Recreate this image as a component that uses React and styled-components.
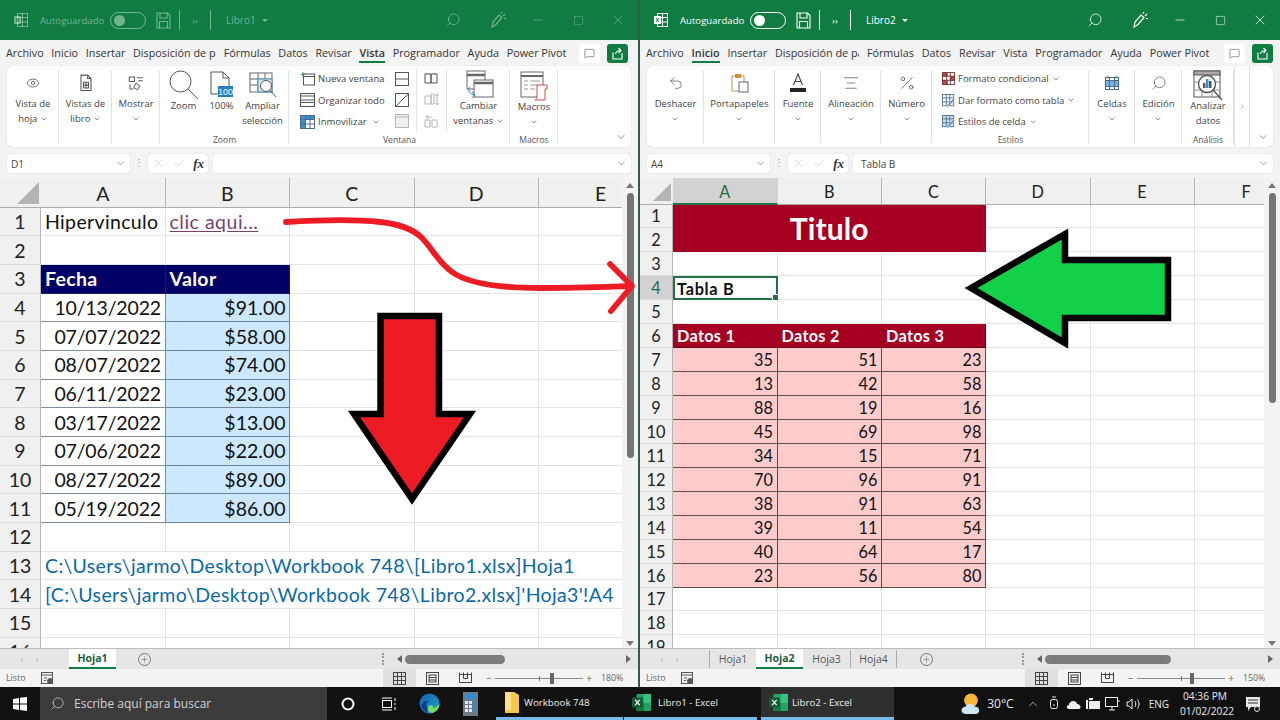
import React from 'react';
import styled, { createGlobalStyle } from 'styled-components';
import {
  ChevronDown, ChevronRight, Search, Minus, Square, X, Check, Plus, Eye, Undo2, AlignCenter, Percent, MessageSquare, ChevronUp,
} from 'lucide-react';

const GlobalStyle = createGlobalStyle`
  html, body { margin: 0; padding: 0; background: #fff; }
  * { box-sizing: border-box; }
  body { font-family: "Open Sans", "Liberation Sans", sans-serif; color: #3b3b3b; }
`;

const Stage = styled.div`
  position: relative;
  width: 1280px;
  height: 720px;
  overflow: hidden;
  display: flex;
  flex-direction: column;
`;

const Windows = styled.div`
  display: flex;
  height: 687px;
  flex: none;
`;

const Pane = styled.div`
  width: ${p => p.$w}px;
  flex: none;
  display: flex;
  flex-direction: column;
  background: #f3f3f3;
  border-left: ${p => (p.$divider ? '2px solid #2f5f48' : 'none')};
`;

/* title bar */
const TitleBar = styled.div`
  height: 40px;
  flex: none;
  background: #107c41;
  display: flex;
  align-items: center;
  color: ${p => (p.$dim ? 'rgba(255,255,255,.42)' : '#fff')};
  font-size: 9.6px;
  padding-left: 13px;
`;
const AutoSave = styled.span`
  margin-left: 11px;
  width: 70px;
  white-space: nowrap;
`;
const Toggle = styled.span`
  width: 36px;
  height: 17px;
  border: 1px solid currentColor;
  border-radius: 9px;
  display: flex;
  align-items: center;
  padding-left: 3px;
  &::before {
    content: "";
    width: 11px;
    height: 11px;
    border-radius: 50%;
    background: currentColor;
  }
`;
const TitleIcon = styled.span`
  width: ${p => p.$w || 40}px;
  margin-left: ${p => p.$ml || 0}px;
  display: flex;
  justify-content: center;
  align-items: center;
  flex: none;
`;
const TitleSep = styled.span`
  width: 1px;
  height: 20px;
  background: currentColor;
  flex: none;
`;
const BookName = styled.span`
  margin-left: 15px;
  font-size: 10px;
  display: flex;
  align-items: center;
  gap: 6px;
  white-space: nowrap;
`;
const Caret = styled.span`
  width: 0;
  height: 0;
  border-left: 3px solid transparent;
  border-right: 3px solid transparent;
  border-top: 3px solid currentColor;
`;
const TitleRight = styled.div`
  margin-left: auto;
  display: flex;
  align-items: center;
`;

/* tabs */
const TabStrip = styled.div`
  height: 26px;
  flex: none;
  display: flex;
  align-items: center;
  padding-left: 6px;
  gap: ${p => p.$gap}px;
  font-size: 10.8px;
  color: #333;
`;
const Tab = styled.span`
  position: relative;
  white-space: nowrap;
  flex: none;
  ${p => p.$clip && `width: ${p.$clip}px; overflow: hidden;`}
  height: 18px;
  line-height: 17px;
  border-bottom: ${p => (p.$active ? '2px solid #107c41' : '2px solid transparent')};
  font-weight: ${p => (p.$active ? 600 : 400)};
`;
const TabActions = styled.div`
  margin-left: auto;
  display: flex;
  gap: 7px;
  padding-right: ${p => p.$pr}px;
`;
const ActionBtn = styled.span`
  width: 21px;
  height: 19px;
  border-radius: 3px;
  background: ${p => (p.$green ? '#107c41' : '#fff')};
  color: ${p => (p.$green ? '#fff' : '#444')};
  display: flex;
  align-items: center;
  justify-content: center;
`;

/* ribbon */
const Ribbon = styled.div`
  height: 81px;
  flex: none;
  margin: 0 7px 7px;
  background: #fff;
  border-radius: 5px;
  display: flex;
  font-size: 9.5px;
  color: #444;
  box-shadow: 0 0 1px rgba(0,0,0,.25);
`;
const Group = styled.div`
  width: ${p => p.$w}px;
  flex: none;
  display: flex;
  flex-direction: column;
  position: relative;
  &::after {
    content: "";
    position: absolute;
    right: 0;
    top: 4px;
    bottom: 4px;
    width: 1px;
    background: #e1e1e1;
  }
`;
const GroupBody = styled.div`
  flex: 1;
  display: flex;
  min-height: 0;
`;
const GroupLabel = styled.div`
  height: 13px;
  line-height: 12px;
  text-align: center;
  font-size: 8.6px;
  color: #555;
`;
const BigBtn = styled.div`
  width: ${p => (p.$w ? `${p.$w}px` : '100%')};
  flex: none;
  display: flex;
  flex-direction: column;
  align-items: center;
  padding-top: 5px;
`;
const BtnLabel = styled.div`
  text-align: center;
  line-height: 14.5px;
  white-space: nowrap;
`;
const IconBox = styled.div`
  height: ${p => p.$h || 24}px;
  margin-bottom: ${p => (p.$h ? 0 : 2)}px;
  flex: none;
  display: flex;
  align-items: center;
  justify-content: center;
  color: #555;
`;
const SmallList = styled.div`
  width: ${p => p.$w}px;
  flex: none;
  display: flex;
  flex-direction: column;
  padding: 2px 0 0 ${p => p.$pl}px;
`;
const SmallItem = styled.div`
  height: 21.5px;
  display: flex;
  align-items: center;
  gap: 3px;
  white-space: nowrap;
  svg { flex: none; }
`;
const IconCol = styled.div`
  width: ${p => p.$w}px;
  flex: none;
  margin-top: 2px;
  height: 64px;
  display: flex;
  flex-direction: column;
  align-items: center;
  border-right: 1px solid #e4e4e4;
`;
const IconCell = styled.div`
  height: 21.5px;
  display: flex;
  align-items: center;
  color: ${p => (p.$muted ? '#b5b5b5' : '#555')};
`;
const RibbonEnd = styled.div`
  flex: 1;
  display: flex;
  justify-content: flex-end;
  align-items: flex-end;
  padding: 0 4px 4px 0;
  color: #555;
`;
const RibbonScroll = styled.div`
  width: 16px;
  flex: none;
  border-left: 1px solid #e1e1e1;
  border-right: 1px solid #e1e1e1;
  display: flex;
  align-items: center;
  justify-content: center;
  color: #888;
`;

/* formula bar */
const FormulaBar = styled.div`
  height: 19px;
  flex: none;
  margin: 0 7px 5px;
  display: flex;
  font-size: 10px;
  color: #444;
`;
const FormulaBox = styled.div`
  width: ${p => (p.$w ? `${p.$w}px` : 'auto')};
  flex: ${p => (p.$w ? 'none' : 1)};
  background: #fff;
  border-radius: 3px;
  display: flex;
  align-items: center;
  justify-content: space-between;
  padding: 0 4px;
  margin-left: ${p => p.$ml || 0}px;
  box-shadow: 0 0 1px rgba(0,0,0,.3);
`;
const FormulaValue = styled.span`
  padding-left: 4px;
`;
const FormulaDots = styled.span`
  width: 18px;
  flex: none;
  text-align: center;
  color: #999;
  line-height: 17px;
`;
const Fx = styled.span`
  font-family: "Liberation Serif", serif;
  font-style: italic;
  font-weight: 700;
  font-size: 13px;
  color: #333;
`;

/* sheet */
const SheetArea = styled.div`
  flex: 1;
  display: flex;
  min-height: 0;
  border-bottom: 1px solid #bdbdbd;
`;
const SheetGrid = styled.div`
  flex: 1;
  min-width: 0;
  display: grid;
  grid-template-columns: ${p => p.$cols};
  grid-template-rows: ${p => p.$head}px;
  grid-auto-rows: ${p => p.$row}px;
  align-content: start;
  overflow: hidden;
  background: #fff;
  font-family: Lato, "Open Sans", sans-serif;
  font-size: ${p => p.$size}px;
  color: #111;
  letter-spacing: ${p => p.$track}px;
`;
const Corner = styled.div`
  position: relative;
  background: #f0f0f0;
  border-bottom: 1px solid #adadad;
  &::after {
    content: "";
    position: absolute;
    right: 2px;
    bottom: 3px;
    width: 0;
    height: 0;
    border-left: ${p => p.$s}px solid transparent;
    border-bottom: ${p => p.$s}px solid #b4b4b4;
  }
`;
const ColHead = styled.div`
  background: ${p => (p.$on ? '#d2d2d2' : '#f0f0f0')};
  color: ${p => (p.$on ? '#1f6b46' : '#222')};
  border-right: 1px solid ${p => (p.$on ? '#d2d2d2' : '#b5b5b5')};
  border-bottom: ${p => (p.$on ? '2px solid #217346' : '1px solid #adadad')};
  display: flex;
  align-items: center;
  justify-content: center;
  padding-top: 2px;
  letter-spacing: 0;
`;
const RowHead = styled.div`
  background: ${p => (p.$on ? '#d2d2d2' : '#f0f0f0')};
  color: ${p => (p.$on ? '#1f6b46' : '#222')};
  border-right: 1px solid #b5b5b5;
  border-bottom: 1px solid #dcdcdc;
  display: flex;
  align-items: center;
  justify-content: center;
  overflow: hidden;
  letter-spacing: 0;
`;
const Cell = styled.div`
  position: relative;
  grid-column: span ${p => p.$span || 1};
  grid-row: span ${p => p.$rows || 1};
  background: ${p => p.$bg || 'transparent'};
  color: ${p => p.$fg || 'inherit'};
  font-weight: ${p => (p.$bold ? 700 : 400)};
  font-size: ${p => (p.$fs ? `${p.$fs}px` : 'inherit')};
  letter-spacing: ${p => (p.$track !== undefined ? `${p.$track}px` : 'inherit')};
  text-decoration: ${p => (p.$link ? 'underline' : 'none')};
  text-underline-offset: 2px;
  border-right: 1px solid ${p => p.$line || '#e3e3e3'};
  border-bottom: 1px solid ${p => p.$line || '#e3e3e3'};
  display: flex;
  align-items: center;
  justify-content: ${p => (p.$center ? 'center' : p.$right ? 'flex-end' : 'flex-start')};
  padding: 0 3.5px 0 4px;
  white-space: nowrap;
  overflow: visible;
  ${p => p.$selected && `
    border: 2px solid #217346;
    padding-left: 2px;
    &::after {
      content: "";
      position: absolute;
      right: -3px;
      bottom: -3px;
      width: 5px;
      height: 5px;
      background: #217346;
      border: 1px solid #fff;
    }
  `}
`;

const VScroll = styled.div`
  width: 16px;
  flex: none;
  position: relative;
  background: #f3f3f3;
`;
const VThumb = styled.div`
  position: absolute;
  left: 5px;
  right: 4px;
  top: 15px;
  height: ${p => p.$h}px;
  border-radius: 4px;
  background: #757575;
`;
const ScrollArrow = styled.span`
  position: absolute;
  left: 4px;
  ${p => (p.$up ? 'top: 5px; border-bottom: 5px solid #777;' : 'bottom: 2px; border-top: 5px solid #777;')}
  width: 0;
  height: 0;
  border-left: 4px solid transparent;
  border-right: 4px solid transparent;
`;

/* sheet tabs */
const TabsBar = styled.div`
  height: 20px;
  flex: none;
  display: flex;
  background: #e6e6e6;
  color: #555;
  font-size: 10.5px;
`;
const SheetTabs = styled.div`
  width: 375px;
  flex: none;
  display: flex;
  align-items: stretch;
`;
const TabNav = styled.div`
  width: 69px;
  flex: none;
  display: flex;
  align-items: center;
  justify-content: center;
  gap: 12px;
  color: #b5b5b5;
  padding-right: 10px;
`;
const SheetTab = styled.div`
  width: 47px;
  flex: none;
  display: flex;
  align-items: center;
  justify-content: center;
  border-left: ${p => (p.$sep && !p.$active ? '1px solid #aaa' : 'none')};
  border-right: ${p => (p.$end ? '1px solid #aaa' : 'none')};
  margin: ${p => (p.$active ? '0' : '1px 0')};
  background: ${p => (p.$active ? '#fff' : 'transparent')};
  color: ${p => (p.$active ? '#1d5c3c' : '#555')};
  font-weight: ${p => (p.$active ? 700 : 400)};
  border-bottom: ${p => (p.$active ? '2px solid #107c41' : 'none')};
`;
const AddSheet = styled.span`
  width: 13px;
  height: 13px;
  margin: auto 0 auto ${p => p.$ml}px;
  border: 1px solid #777;
  border-radius: 50%;
  display: flex;
  align-items: center;
  justify-content: center;
  flex: none;
`;
const HScroll = styled.div`
  flex: 1;
  display: flex;
  align-items: center;
  padding-left: 7px;
`;
const HDots = styled.span`
  width: 2px;
  height: 12px;
  border-left: 2px dotted #999;
  flex: none;
`;
const HArrow = styled.span`
  flex: none;
  width: 0;
  height: 0;
  border-top: 4px solid transparent;
  border-bottom: 4px solid transparent;
  ${p => (p.$left ? 'border-right: 5px solid #666; margin: 0 3px 0 13px;' : 'border-left: 5px solid #666; margin: 0 7px 0 auto;')}
`;
const HThumb = styled.span`
  width: ${p => p.$w}px;
  height: 9px;
  border-radius: 5px;
  background: #7c7c7c;
  flex: none;
`;

/* status bar */
const StatusBar = styled.div`
  height: 18px;
  flex: none;
  display: flex;
  align-items: center;
  padding-left: 6px;
  font-size: 8.8px;
  color: #666;
  background: #f3f3f3;
`;
const StatusMacro = styled.span`
  margin-left: 16px;
  display: flex;
  color: #555;
`;
const ViewBtns = styled.div`
  margin-left: auto;
  display: flex;
  height: 100%;
`;
const ViewBtn = styled.span`
  width: 33px;
  display: flex;
  align-items: center;
  justify-content: center;
  background: ${p => (p.$on ? '#e0e0e0' : 'transparent')};
  color: #444;
`;
const ZoomSlider = styled.div`
  width: 106px;
  margin-left: 4px;
  display: flex;
  align-items: center;
  gap: 3px;
  color: #666;
  font-size: 10px;
`;
const SliderTrack = styled.span`
  position: relative;
  flex: 1;
  height: 1px;
  background: #888;
  &::before {
    content: "";
    position: absolute;
    left: 50%;
    top: -2px;
    width: 1px;
    height: 5px;
    background: #777;
  }
  &::after {
    content: "";
    position: absolute;
    left: ${p => p.$at}%;
    top: -5px;
    width: 4px;
    height: 11px;
    background: #666;
  }
`;
const ZoomValue = styled.span`
  width: 46px;
  padding-left: 9px;
  white-space: nowrap;
`;

/* taskbar */
const Taskbar = styled.div`
  height: 33px;
  flex: none;
  background: #111;
  display: flex;
  align-items: stretch;
  color: #eee;
  font-size: 9.7px;
`;
const StartBtn = styled.div`
  width: 40px;
  flex: none;
  display: flex;
  align-items: center;
  justify-content: center;
`;
const SearchBox = styled.div`
  width: 287px;
  flex: none;
  background: #3c3c3c;
  display: flex;
  align-items: center;
  gap: 9px;
  padding-left: 10px;
  font-size: 12px;
  color: #d0d0d0;
`;
const TaskIcon = styled.div`
  width: 41px;
  flex: none;
  display: flex;
  align-items: center;
  justify-content: center;
`;
const TaskApp = styled.div`
  width: ${p => p.$w}px;
  margin-left: ${p => p.$ml || 0}px;
  flex: none;
  display: flex;
  align-items: center;
  gap: ${p => p.$gap || 6}px;
  padding-left: ${p => p.$pl}px;
  background: ${p => (p.$active ? '#2f2f2f' : 'transparent')};
  border-bottom: 3px solid #76b9ed;
  white-space: nowrap;
`;
const Tray = styled.div`
  margin-left: auto;
  display: flex;
  align-items: center;
  padding-right: 19px;
  color: #e8e8e8;
`;
const TrayItem = styled.span`
  display: flex;
  align-items: center;
  margin-left: ${p => p.$ml}px;
  white-space: nowrap;
  font-size: ${p => p.$fs || 10}px;
`;
const Clock = styled.div`
  margin-left: 11px;
  width: 50px;
  text-align: center;
  line-height: 15px;
  font-size: 10.2px;
`;

const Annotations = styled.svg`
  position: absolute;
  inset: 0;
  pointer-events: none;
`;

const Ico = ({ s = 16, v = 24, w = 1.3, children }) => (
  <svg width={s} height={s} viewBox={`0 0 ${v} ${v}`} fill="none" stroke="currentColor" strokeWidth={w}>{children}</svg>
);

const Chev = () => <ChevronDown size={8} strokeWidth={1.8} style={{ verticalAlign: 'middle' }} />;

const ExcelGlyph = () => (
  <svg width="16" height="16" viewBox="0 0 16 16" fill="none" stroke="currentColor" strokeWidth="1">
    <rect x="4.5" y="1.5" width="10" height="13" />
    <path d="M9.5 1.5v13M4.5 5.5h10M4.5 10h10" />
    <rect x="1" y="4" width="7" height="8" fill="currentColor" stroke="none" />
    <path d="M3 6l3 4M6 6l-3 4" stroke="#107c41" strokeWidth="1" />
  </svg>
);
const SaveGlyph = () => (
  <svg width="15" height="17" viewBox="0 0 15 17" fill="none" stroke="currentColor" strokeWidth="1.1">
    <path d="M1 1h10.5L14 3.5V16H1z" />
    <path d="M4 1v5h7V1M3.5 16v-6.500h8V16" />
  </svg>
);
const PenGlyph = () => (
  <svg width="17" height="18" viewBox="0 0 17 18" fill="none" stroke="currentColor" strokeWidth="1.2">
    <path d="M2 16l1-5 6-7 3 2.500-6 7z" />
    <path d="M11 2.500l1-1.500M13 5l2-2M14 7.500h2" />
  </svg>
);

const Title = ({ dim, name }) => (
  <TitleBar $dim={dim}>
    <ExcelGlyph />
    <AutoSave>Autoguardado</AutoSave>
    <Toggle />
    <TitleIcon $w={32} $ml={1}><SaveGlyph /></TitleIcon>
    <TitleSep />
    <TitleIcon $w={30}>››</TitleIcon>
    <TitleSep />
    <BookName>{name}<Caret /></BookName>
    <TitleRight>
      <TitleIcon><Search size={16} strokeWidth={1.2} style={{ transform: 'scaleX(-1)' }} /></TitleIcon>
      <TitleIcon $ml={5}><PenGlyph /></TitleIcon>
      <TitleIcon><Minus size={14} strokeWidth={1.2} /></TitleIcon>
      <TitleIcon><Square size={11} strokeWidth={1.2} /></TitleIcon>
      <TitleIcon><X size={16} strokeWidth={1.1} /></TitleIcon>
    </TitleRight>
  </TitleBar>
);

const CommentGlyph = () => <MessageSquare size={11} strokeWidth={1.2} />;
const ShareGlyph = () => (
  <svg width="13" height="13" viewBox="0 0 13 13" fill="none" stroke="currentColor" strokeWidth="1.1">
    <path d="M2 5.500V12h9V6M4.500 7C5 4.500 7 3.500 9.500 3.500M7.500 1l2.500 2.500L7.500 6" />
  </svg>
);

const Tabs = ({ active, clip, label, pr, gap }) => {
  const list = ['Archivo', 'Inicio', 'Insertar', label, 'Fórmulas', 'Datos', 'Revisar', 'Vista', 'Programador', 'Ayuda', 'Power Pivot'];
  return (
    <TabStrip $gap={gap}>
      {list.map(t => (
        <Tab key={t} $active={t === active} $clip={t === label ? clip : 0}>{t}</Tab>
      ))}
      <TabActions $pr={pr}>
        <ActionBtn><CommentGlyph /></ActionBtn>
        <ActionBtn $green><ShareGlyph /></ActionBtn>
      </TabActions>
    </TabStrip>
  );
};

const SheetDocIcon = () => (
  <Ico s={20}><path d="M6 2.500h8l4 4V21H6z" /><path d="M14 2.500v4h4M9 11h6v7H9zM9 14.500h6M12 11v7" /></Ico>
);
const ShowIcon = () => (
  <Ico s={18}>
    <rect x="3" y="4" width="7" height="6" /><path d="M13 5h8M15 9h6" />
    <path d="M4 14v6h5M12 12l5 4-3 5-5-3z" />
  </Ico>
);
const BigZoomIcon = () => (
  <svg width="30" height="30" viewBox="0 0 30 30" fill="none" stroke="#555" strokeWidth="1">
    <circle cx="11.500" cy="11.500" r="10.500" /><path d="M19 19l10 10" />
  </svg>
);
const HundredIcon = () => (
  <svg width="24" height="28" viewBox="0 0 24 28" fill="none">
    <path d="M1 1h12l6 6v16H1z" stroke="#555" /><path d="M13 1v6h6" stroke="#555" />
    <rect x="8" y="15" width="15" height="11" fill="#1f7fc4" />
    <text x="15.500" y="24" fontSize="9" fill="#fff" textAnchor="middle" fontFamily="Liberation Sans">100</text>
  </svg>
);
const ZoomSelIcon = () => (
  <svg width="28" height="28" viewBox="0 0 28 28" fill="none" stroke="#666">
    <rect x="1" y="2" width="22" height="19" /><path d="M1 8h22M1 14h22M9 2v19M16 2v19" />
    <rect x="9" y="8" width="14" height="13" fill="#cfe6f7" stroke="#4a90c4" />
    <circle cx="17" cy="15" r="5.500" fill="#fff" stroke="#555" /><path d="M21 19l6 7" stroke="#555" />
  </svg>
);
const NewWinIcon = () => (
  <svg width="15" height="14" viewBox="0 0 15 14" fill="none" stroke="#555">
    <rect x="3.500" y="2" width="11" height="11" /><path d="M3.500 4.500h11" />
    <path d="M3 0v5M.500 2.500h5" stroke="#2e9a5e" />
  </svg>
);
const ArrangeIcon = () => (
  <svg width="15" height="14" viewBox="0 0 15 14" fill="none" stroke="#555" strokeWidth="1.1">
    <rect x=".5" y=".5" width="14" height="13" /><path d="M.5 3h14M.5 7h14M.5 9.500h14" />
  </svg>
);
const FreezeIcon = () => (
  <svg width="15" height="14" viewBox="0 0 15 14" fill="none" stroke="#4a6c8c">
    <rect x=".5" y=".5" width="14" height="13" fill="#fff" />
    <rect x=".5" y=".5" width="14" height="4" fill="#3d8fd1" />
    <rect x=".5" y=".5" width="5" height="13" fill="#3d8fd1" />
    <path d="M.5 4.500h14M.5 9h14M5.500.5v13M10 .5v13" />
  </svg>
);
const PanelIcon = ({ kind }) => (
  <svg width="14" height="14" viewBox="0 0 14 14" fill={kind === 'hide' ? '#eee' : 'none'} stroke="currentColor">
    <rect x=".5" y=".5" width="13" height="13" />
    {kind === 'split' && <path d="M.5 7h13" />}
    {kind === 'diag' && <path d="M.5 13.500l13-13" />}
    {kind === 'hide' && <path d="M.5 3h13" />}
  </svg>
);
const BooksIcon = ({ d }) => (
  <svg width="15" height="14" viewBox="0 0 15 14" fill="none" stroke="currentColor">
    <path d={d} />
  </svg>
);
const SwitchIcon = () => (
  <svg width="30" height="30" viewBox="0 0 30 30" fill="none" stroke="#666">
    <rect x="3" y="1" width="18" height="18" fill="#fff" /><path d="M3 5h18" strokeWidth="2.500" />
    <rect x="10" y="10" width="19" height="17" fill="#fff" /><path d="M10 13h19" strokeWidth="2.500" />
    <path d="M6 17c-3 4 0 8 5 8M8 22l3 3-3 3" stroke="#2a86c7" />
  </svg>
);
const MacrosIcon = () => (
  <svg width="28" height="30" viewBox="0 0 28 30" fill="none" stroke="#666">
    <rect x="1" y="1" width="22" height="25" /><path d="M1 5h22" strokeWidth="2" />
    <path d="M4 10h4M10 10h10M4 14h4M10 14h8M4 18h4M10 18h5" stroke="#999" />
    <path d="M17 14h10v4h-2v11H15c2-1 2-2 2-3z" fill="#fff" stroke="#cf4d4d" />
  </svg>
);
const ClipboardIcon = () => (
  <svg width="18" height="20" viewBox="0 0 18 20" fill="none">
    <rect x="1" y="3" width="12" height="15" stroke="#c9954a" />
    <rect x="4" y="1" width="6" height="4" fill="#c9954a" />
    <rect x="8" y="9" width="9" height="10" fill="#fff" stroke="#666" />
  </svg>
);
const FontIcon = () => (
  <svg width="18" height="20" viewBox="0 0 18 20" fill="none" stroke="#444" strokeWidth="1.1">
    <path d="M4.500 12L9 1l4.500 11M6 8.500h6" />
    <rect x="1" y="15" width="16" height="4" fill="#222" stroke="none" />
  </svg>
);
const CondIcon = () => (
  <svg width="13" height="13" viewBox="0 0 14 14" stroke="#7a3b3b" fill="#fff">
    <rect x=".5" y=".5" width="13" height="13" />
    <rect x=".5" y=".5" width="5" height="4" fill="#d0423a" /><rect x="9" y="5" width="4.500" height="4" fill="#d0423a" />
    <rect x=".5" y="9" width="5" height="4.500" fill="#d0423a" />
    <path d="M.5 4.500h13M.5 9h13M5 .5v13M9 .5v13" fill="none" />
  </svg>
);
const TableStyleIcon = ({ fill }) => (
  <svg width="13" height="13" viewBox="0 0 15 15" stroke="#4a6c8c" fill={fill}>
    <rect x=".5" y=".5" width="13" height="13" />
    <path d="M.5 4.500h13M.5 9h13M5 .5v13M9 .5v13" fill="none" />
    <path d="M5 14L13 5l2 1.500-8 8.500z" fill="#5a8fc4" stroke="#fff" strokeWidth=".6" />
  </svg>
);
const CellsIcon = () => (
  <svg width="16" height="16" viewBox="0 0 16 16" stroke="#4a6c8c" fill="none">
    <rect x="1.500" y="2.500" width="13" height="12" fill="#fff" />
    <rect x="1.500" y="5.500" width="13" height="6" fill="#77b4e3" />
    <path d="M1.500 5.500h13M1.500 11.500h13M5.500 2.500v12M10.500 2.500v12M4 .5v3M12 .5v3" />
  </svg>
);
const AnalyzeIcon = () => (
  <svg width="30" height="31" viewBox="0 0 30 31" fill="none" stroke="#555">
    <rect x="1" y="1" width="26" height="26" /><rect x="1" y="1" width="26" height="4" fill="#aaa" />
    <path d="M1 12h26M1 20h26M9 5v22M19 5v22" stroke="#888" />
    <circle cx="14" cy="14" r="8.500" fill="#fff" strokeWidth="1.4" />
    <rect x="10" y="13" width="2.500" height="5" fill="#555" stroke="none" />
    <rect x="13" y="9" width="2.500" height="9" fill="#3c8fd0" stroke="none" />
    <rect x="16" y="11" width="2.500" height="7" fill="#555" stroke="none" />
    <path d="M20 20l9 10" strokeWidth="1.4" />
  </svg>
);

const LeftRibbon = () => (
  <Ribbon>
    <Group $w={52}><GroupBody><BigBtn><IconBox><Eye size={14} strokeWidth={1.4} /></IconBox><BtnLabel>Vista de<br />hoja <Chev /></BtnLabel></BigBtn></GroupBody></Group>
    <Group $w={53}><GroupBody><BigBtn><IconBox><SheetDocIcon /></IconBox><BtnLabel>Vistas de<br />libro <Chev /></BtnLabel></BigBtn></GroupBody></Group>
    <Group $w={48}><GroupBody><BigBtn><IconBox><ShowIcon /></IconBox><BtnLabel>Mostrar<br /><Chev /></BtnLabel></BigBtn></GroupBody></Group>
    <Group $w={129}>
      <GroupBody>
        <BigBtn $w={47}><IconBox $h={28}><BigZoomIcon /></IconBox><BtnLabel>Zoom</BtnLabel></BigBtn>
        <BigBtn $w={29}><IconBox $h={28}><HundredIcon /></IconBox><BtnLabel>100%</BtnLabel></BigBtn>
        <BigBtn $w={53}><IconBox $h={28}><ZoomSelIcon /></IconBox><BtnLabel>Ampliar<br />selección</BtnLabel></BigBtn>
      </GroupBody>
      <GroupLabel>Zoom</GroupLabel>
    </Group>
    <Group $w={221}>
      <GroupBody>
        <SmallList $w={99} $pl={11}>
          <SmallItem><NewWinIcon />Nueva ventana</SmallItem>
          <SmallItem><ArrangeIcon />Organizar todo</SmallItem>
          <SmallItem><FreezeIcon />Inmovilizar&nbsp; <Chev /></SmallItem>
        </SmallList>
        <IconCol $w={29}>
          <IconCell><PanelIcon kind="split" /></IconCell>
          <IconCell><PanelIcon kind="diag" /></IconCell>
          <IconCell $muted><PanelIcon kind="hide" /></IconCell>
        </IconCol>
        <IconCol $w={30}>
          <IconCell><BooksIcon d="M1 2h6v9H1zM7 2h6v9H7zM3 2V1M11 2V1" /></IconCell>
          <IconCell $muted><BooksIcon d="M1 3h6v8H1zM7 1h3v10H7zM13 1v11M11.500 3L13 1l1.500 2M11.500 10l1.500 2 1.500-2" /></IconCell>
          <IconCell $muted><BooksIcon d="M1 6h5v7H1zM8 6h5v7H8zM4 1L2 3l2 2M2 3h6" /></IconCell>
        </IconCol>
        <BigBtn $w={63}><IconBox $h={28}><SwitchIcon /></IconBox><BtnLabel>Cambiar<br />ventanas <Chev /></BtnLabel></BigBtn>
      </GroupBody>
      <GroupLabel>Ventana</GroupLabel>
    </Group>
    <Group $w={48}>
      <GroupBody><BigBtn><IconBox $h={29}><MacrosIcon /></IconBox><BtnLabel>Macros<br /><Chev /></BtnLabel></BigBtn></GroupBody>
      <GroupLabel>Macros</GroupLabel>
    </Group>
    <RibbonEnd><ChevronDown size={12} strokeWidth={1.3} /></RibbonEnd>
  </Ribbon>
);

const RightRibbon = () => (
  <Ribbon>
    <Group $w={57}><GroupBody><BigBtn><IconBox><Undo2 size={16} strokeWidth={1.1} /></IconBox><BtnLabel>Deshacer<br /><Chev /></BtnLabel></BigBtn></GroupBody></Group>
    <Group $w={71}><GroupBody><BigBtn><IconBox><ClipboardIcon /></IconBox><BtnLabel>Portapapeles<br /><Chev /></BtnLabel></BigBtn></GroupBody></Group>
    <Group $w={46}><GroupBody><BigBtn><IconBox><FontIcon /></IconBox><BtnLabel>Fuente<br /><Chev /></BtnLabel></BigBtn></GroupBody></Group>
    <Group $w={60}><GroupBody><BigBtn><IconBox><AlignCenter size={18} strokeWidth={1} /></IconBox><BtnLabel>Alineación<br /><Chev /></BtnLabel></BigBtn></GroupBody></Group>
    <Group $w={51}><GroupBody><BigBtn><IconBox><Percent size={18} strokeWidth={1} /></IconBox><BtnLabel>Número<br /><Chev /></BtnLabel></BigBtn></GroupBody></Group>
    <Group $w={157}>
      <GroupBody>
        <SmallList $w={157} $pl={10}>
          <SmallItem><CondIcon />Formato condicional <Chev /></SmallItem>
          <SmallItem><TableStyleIcon fill="#fff" />Dar formato como tabla <Chev /></SmallItem>
          <SmallItem><TableStyleIcon fill="#cfe0ee" />Estilos de celda <Chev /></SmallItem>
        </SmallList>
      </GroupBody>
      <GroupLabel>Estilos</GroupLabel>
    </Group>
    <Group $w={46}><GroupBody><BigBtn><IconBox><CellsIcon /></IconBox><BtnLabel>Celdas<br /><Chev /></BtnLabel></BigBtn></GroupBody></Group>
    <Group $w={47}><GroupBody><BigBtn><IconBox><Search size={16} strokeWidth={1.1} style={{ transform: 'scaleX(-1)' }} /></IconBox><BtnLabel>Edición<br /><Chev /></BtnLabel></BigBtn></GroupBody></Group>
    <Group $w={52}>
      <GroupBody><BigBtn><IconBox $h={28}><AnalyzeIcon /></IconBox><BtnLabel>Analizar<br />datos</BtnLabel></BigBtn></GroupBody>
      <GroupLabel>Análisis</GroupLabel>
    </Group>
    <RibbonScroll><ChevronRight size={7} /></RibbonScroll>
    <RibbonEnd><ChevronDown size={12} strokeWidth={1.3} /></RibbonEnd>
  </Ribbon>
);

const Formula = ({ name, value }) => (
  <FormulaBar>
    <FormulaBox $w={123}>{name}<ChevronDown size={11} strokeWidth={1.2} /></FormulaBox>
    <FormulaDots>⋮</FormulaDots>
    <FormulaBox $w={60}>
      <X size={13} strokeWidth={.8} color="#aaa" />
      <Check size={13} strokeWidth={.8} color="#aaa" />
      <Fx>fx</Fx>
    </FormulaBox>
    <FormulaBox $ml={5}>
      <FormulaValue>{value}</FormulaValue>
      <ChevronDown size={11} strokeWidth={1.2} />
    </FormulaBox>
  </FormulaBar>
);

const leftRows = (() => {
  const navy = { bg: '#000066', fg: '#fff', bold: true, line: '#1a1a66' };
  const dates = ['10/13/2022', '07/07/2022', '08/07/2022', '06/11/2022', '03/17/2022', '07/06/2022', '08/27/2022', '05/19/2022'];
  const vals = ['$91.00', '$58.00', '$74.00', '$23.00', '$13.00', '$22.00', '$89.00', '$86.00'];
  const blank = [{}, {}, {}];
  const rows = [
    [{ t: 'Hipervinculo' }, { t: 'clic aqui...', fg: '#7b3f6e', link: true, track: 0.5 }, ...blank],
    [{}, {}, ...blank],
    [{ t: 'Fecha', ...navy }, { t: 'Valor', ...navy }, ...blank],
  ];
  dates.forEach((d, i) => {
    rows.push([
      { t: d, right: true, line: '#7d8f9e', track: -0.15 },
      { t: vals[i], right: true, bg: '#cce8ff', line: '#6d8496', track: 0 },
      ...blank,
    ]);
  });
  rows.push([{}, {}, ...blank]);
  rows.push([{ t: 'C:\\Users\\jarmo\\Desktop\\Workbook 748\\[Libro1.xlsx]Hoja1', fg: '#0a69a8', span: 5 }]);
  rows.push([{ t: "[C:\\Users\\jarmo\\Desktop\\Workbook 748\\Libro2.xlsx]'Hoja3'!A4", fg: '#0a69a8', span: 5 }]);
  rows.push([{}, {}, ...blank]);
  rows.push([{}, {}, ...blank]);
  return rows;
})();

const rightRows = (() => {
  const red = { bg: '#a50021', fg: '#fff', bold: true, line: '#5a1020', track: 0.3 };
  const pink = { bg: '#ffcccc', right: true, line: '#5e4a4a' };
  const data = [
    [35, 51, 23], [13, 42, 58], [88, 19, 16], [45, 69, 98], [34, 15, 71],
    [70, 96, 91], [38, 91, 63], [39, 11, 54], [40, 64, 17], [23, 56, 80],
  ];
  const blank = [{}, {}, {}];
  return [
    [{ t: 'Titulo', bg: '#a50021', fg: '#fff', bold: true, span: 3, rows: 2, center: true, fs: 30, line: '#a50021' }, ...blank],
    [...blank],
    [{}, {}, {}, ...blank],
    [{ t: 'Tabla B', bold: true, selected: true, track: 0.7 }, {}, {}, ...blank],
    [{}, {}, {}, ...blank],
    [{ t: 'Datos 1', ...red }, { t: 'Datos 2', ...red }, { t: 'Datos 3', ...red }, ...blank],
    ...data.map(r => [...r.map(v => ({ t: v, ...pink })), ...blank]),
    [{}, {}, {}, ...blank],
    [{}, {}, {}, ...blank],
    [{}, {}, {}, ...blank],
  ];
})();

const Sheet = ({ cols, head, row, size, track, corner, columns, rows, activeCol, activeRow, thumb }) => (
  <SheetArea>
    <SheetGrid $cols={cols} $head={head} $row={row} $size={size} $track={track}>
      <Corner $s={corner} />
      {columns.map(c => <ColHead key={c} $on={c === activeCol}>{c}</ColHead>)}
      {rows.map((cells, i) => (
        <React.Fragment key={i}>
          <RowHead $on={i + 1 === activeRow}>{i + 1}</RowHead>
          {cells.map((c, j) => (
            <Cell
              key={j}
              $span={c.span}
              $rows={c.rows}
              $bg={c.bg}
              $fg={c.fg}
              $bold={c.bold}
              $right={c.right}
              $center={c.center}
              $link={c.link}
              $line={c.line}
              $fs={c.fs}
              $track={c.track}
              $selected={c.selected}
            >
              {c.t}
            </Cell>
          ))}
        </React.Fragment>
      ))}
    </SheetGrid>
    <VScroll>
      <ScrollArrow $up />
      <VThumb $h={thumb} />
      <ScrollArrow />
    </VScroll>
  </SheetArea>
);

const SheetTabsBar = ({ tabs, active, addMl, thumb }) => (
  <TabsBar>
    <SheetTabs>
      <TabNav><span>‹</span><span>›</span></TabNav>
      {tabs.map((t, i) => (
        <SheetTab
          key={t}
          $active={t === active}
          $sep={tabs.length > 1 && i !== 2}
          $end={tabs.length > 1 && i === tabs.length - 1}
        >
          {t}
        </SheetTab>
      ))}
      <AddSheet $ml={addMl}><Plus size={9} strokeWidth={1.2} /></AddSheet>
    </SheetTabs>
    <HScroll>
      <HDots />
      <HArrow $left />
      <HThumb $w={thumb} />
      <HArrow />
    </HScroll>
  </TabsBar>
);

const Status = ({ zoom, at }) => (
  <StatusBar>
    Listo
    <StatusMacro>
      <svg width="13" height="13" viewBox="0 0 13 13" fill="none" stroke="currentColor">
        <rect x=".5" y=".5" width="11" height="11" /><path d="M.5 3h11M3 6h3M3 8.500h2" />
        <circle cx="9" cy="9" r="2.500" fill="currentColor" />
      </svg>
    </StatusMacro>
    <ViewBtns>
      <ViewBtn $on><Ico s={13} v={13} w={1}><rect x=".5" y=".5" width="12" height="12" /><path d="M4.500.5v12M8.500.5v12M.5 4.500h12M.5 8.500h12" /></Ico></ViewBtn>
      <ViewBtn><Ico s={13} v={13} w={1}><rect x=".5" y=".5" width="12" height="12" /><rect x="3" y="3" width="7" height="7" /><path d="M3 5.500h7M3 8h7" /></Ico></ViewBtn>
      <ViewBtn><Ico s={13} v={13} w={1}><path d="M.5 2.500h12v8H.5zM.5.5v10M12.500.5v10M4.500.5v6h4v-6" /></Ico></ViewBtn>
    </ViewBtns>
    <ZoomSlider>
      <span>−</span><SliderTrack $at={at} /><span>+</span>
    </ZoomSlider>
    <ZoomValue>{zoom}</ZoomValue>
  </StatusBar>
);

const WinLogo = () => (
  <svg width="14" height="14" viewBox="0 0 14 14" fill="#fff">
    <path d="M0 2l6-1v5.500H0zM7 .8L14 0v6.500H7zM0 7.500h6V13l-6-1zM7 7.500h7V14l-7-1z" />
  </svg>
);
const EdgeLogo = () => (
  <svg width="21" height="21" viewBox="0 0 21 21">
    <defs>
      <linearGradient id="edgeG" x1="0" y1="0" x2="1" y2="1">
        <stop offset="0" stopColor="#1a5fb4" /><stop offset="1" stopColor="#18a0c4" />
      </linearGradient>
    </defs>
    <circle cx="10.500" cy="10.500" r="10" fill="url(#edgeG)" />
    <path d="M20.500 11c0 3-2 7-6 8.500-4 1-6-2-6-4 0-3 3-4 5-3 1 .5 1 2 .5 2.500 2 0 4-2 6.500-4z" fill="#6fdc6a" />
    <path d="M9 15c-3-2-2-6 1-7-3-1-7 1-8 5 1 3 4 6 7 6.500-1-1-1-3 0-4.500z" fill="#0b3f8c" />
  </svg>
);
const CalcLogo = () => (
  <svg width="15" height="24" viewBox="0 0 15 24">
    <rect width="15" height="24" fill="#6d7b86" />
    <rect x="2" y="2" width="11" height="5" fill="#2d8fd5" />
    <path d="M2 9h3v3H2zM6 9h3v3H6zM2 13h3v3H2zM6 13h3v3H6zM2 17h3v3H2zM6 17h3v3H6z" fill="#dfe8ee" />
    <path d="M10 9h3v11h-3z" fill="#2d8fd5" />
  </svg>
);
const FolderLogo = () => (
  <svg width="14" height="21" viewBox="0 0 14 21">
    <path d="M0 0h9l5 3v18H0z" fill="#f5c84c" />
    <path d="M0 0h6v18H0z" fill="#fbe08a" />
  </svg>
);
const ExcelLogo = () => (
  <svg width="19" height="19" viewBox="0 0 21 21">
    <rect x="5" y="1" width="16" height="19" rx="1" fill="#21a366" />
    <rect x="13" y="1" width="8" height="10" fill="#33c481" />
    <rect x="5" y="11" width="8" height="9" fill="#107c41" />
    <rect y="5" width="12" height="11" rx="1" fill="#185c37" />
    <path d="M3.500 7.500l5 6M8.500 7.500l-5 6" stroke="#fff" strokeWidth="1.300" />
  </svg>
);
const WeatherLogo = () => (
  <svg width="20" height="24" viewBox="0 0 22 24">
    <circle cx="11" cy="8" r="7.500" fill="#f6b73c" />
    <path d="M5 23c-6 0-6-8 0-8 1-4 9-4 10 0 6-1 7 8 1 8z" fill="#cfe6f7" />
  </svg>
);
const NoticeIcon = () => (
  <svg width="16" height="16" viewBox="0 0 16 16" fill="none" stroke="#fff">
    <path d="M1 1h14v10H6l-3 4v-4H1z" fill="#e8e8e8" stroke="none" />
    <path d="M3 4h10M3 7h10" stroke="#333" />
    <circle cx="12" cy="13" r="2.500" fill="#111" stroke="#ddd" />
  </svg>
);

const Bar = () => (
  <Taskbar>
    <StartBtn><WinLogo /></StartBtn>
    <SearchBox>
      <Search size={15} strokeWidth={1.2} style={{ transform: 'scaleX(-1)' }} />
      Escribe aquí para buscar
    </SearchBox>
    <TaskIcon>
      <svg width="14" height="14" viewBox="0 0 14 14" fill="none" stroke="#fff" strokeWidth="2"><circle cx="7" cy="7" r="5.500" /></svg>
    </TaskIcon>
    <TaskIcon>
      <svg width="16" height="16" viewBox="0 0 16 16" fill="none" stroke="#fff"><rect x="1.500" y="4.500" width="9" height="7" /><path d="M1 2h10M1 14h10M14 2v3M14 7v2M14 11v3" /></svg>
    </TaskIcon>
    <TaskIcon><EdgeLogo /></TaskIcon>
    <TaskIcon><CalcLogo /></TaskIcon>
    <TaskApp $w={127} $ml={5} $pl={9} $gap={5}><FolderLogo />Workbook 748</TaskApp>
    <TaskApp $w={133} $ml={1} $pl={8} $gap={7}><ExcelLogo />Libro1 - Excel</TaskApp>
    <TaskApp $w={133} $ml={4} $pl={8} $gap={4} $active><ExcelLogo />Libro2 - Excel</TaskApp>
    <Tray>
      <WeatherLogo />
      <TrayItem $ml={6} $fs={12}>30°C</TrayItem>
      <TrayItem $ml={12}><ChevronUp size={14} strokeWidth={1.2} /></TrayItem>
      <TrayItem $ml={8}>
        <svg width="12" height="16" viewBox="0 0 12 16" fill="none" stroke="#eee"><rect x="2.500" y="3.500" width="7" height="9" rx="2" /><path d="M4 1h4M6 8v2" /></svg>
      </TrayItem>
      <TrayItem $ml={6.5}>
        <svg width="15" height="10" viewBox="0 0 15 10" fill="#eee"><path d="M3 10C0 10 0 6 3 6c0-4 7-6 8-1 4 0 5 5 1 5z" /></svg>
      </TrayItem>
      <TrayItem $ml={4.5}>
        <svg width="14" height="12" viewBox="0 0 14 12" fill="#eee"><rect x="3" y="3" width="11" height="8" /><rect y="2" width="2" height="9" /><rect x="3" y="0" width="4" height="2" /></svg>
      </TrayItem>
      <TrayItem $ml={5.5}>
        <svg width="15" height="14" viewBox="0 0 15 14" fill="none" stroke="#eee"><rect x=".5" y=".5" width="12" height="9" /><path d="M4 13h6M7 10v3M13 4h2" /></svg>
      </TrayItem>
      <TrayItem $ml={6}>
        <svg width="15" height="12" viewBox="0 0 15 12" fill="none" stroke="#eee"><path d="M1 4h2l3-3v10L3 8H1zM9 3c1 2 1 4 0 6M11.500 1.500c2 3 2 6 0 9" /></svg>
      </TrayItem>
      <TrayItem $ml={7.5}>ENG</TrayItem>
      <Clock>04:36 PM<br />01/02/2022</Clock>
      <TrayItem $ml={15}><NoticeIcon /></TrayItem>
    </Tray>
  </Taskbar>
);

const CurvedArrow = () => (
  <g fill="none" stroke="#ed1c24" strokeWidth="5.800" strokeLinecap="round" strokeLinejoin="round">
    <path d="M286 222C320 220 352 219 380 222C400 224 413 229 422 238C432 248 438 262 452 272C470 285 505 288 540 288C575 288 600 287 631 286" />
    <path d="M610 264L632 286L611 311" />
  </g>
);

export default function App() {
  return (
    <Stage>
      <GlobalStyle />
      <Windows>
        <Pane $w={638}>
          <Title dim name="Libro1" />
          <Tabs active="Vista" label="Disposición de pa" clip={83} pr={10} gap={7.7} />
          <LeftRibbon />
          <Formula name="D1" />
          <Sheet
            cols="41px 124.5px 124.5px 124.5px 124.5px 124.5px"
            head={29.7}
            row={28.68}
            size={19.5}
            track={0.35}
            corner={22}
            columns={['A', 'B', 'C', 'D', 'E']}
            rows={leftRows}
            thumb={265}
          />
          <SheetTabsBar tabs={['Hoja1']} active="Hoja1" addMl={22} thumb={100} />
          <Status zoom="180%" at={62} />
        </Pane>
        <Pane $w={642} $divider>
          <Title name="Libro2" />
          <Tabs active="Inicio" label="Disposición de pa" clip={84} pr={7} gap={7.9} />
          <RightRibbon />
          <Formula name="A4" value="Tabla B" />
          <Sheet
            cols="33px 104.500px 104.500px 104px 104.500px 104px 104px"
            head={26.5}
            row={23.95}
            size={16.3}
            track={0.1}
            corner={18}
            columns={['A', 'B', 'C', 'D', 'E', 'F']}
            rows={rightRows}
            activeCol="A"
            activeRow={4}
            thumb={210}
          />
          <SheetTabsBar tabs={['Hoja1', 'Hoja2', 'Hoja3', 'Hoja4']} active="Hoja2" addMl={23} thumb={126} />
          <Status zoom="150%" at={60} />
        </Pane>
      </Windows>
      <Bar />
      <Annotations width="1280" height="720" viewBox="0 0 1280 720">
        <CurvedArrow />
        <polygon points="380.500,316 439,316 439,414 470,414 412,499 354,414 380.500,414" fill="#ed1c24" stroke="#000" strokeWidth="6.500" />
        <polygon points="971,288 1065,234 1065,260 1168,260 1168,318 1065,318 1065,343" fill="#12d048" stroke="#000" strokeWidth="6.500" />
      </Annotations>
    </Stage>
  );
}
